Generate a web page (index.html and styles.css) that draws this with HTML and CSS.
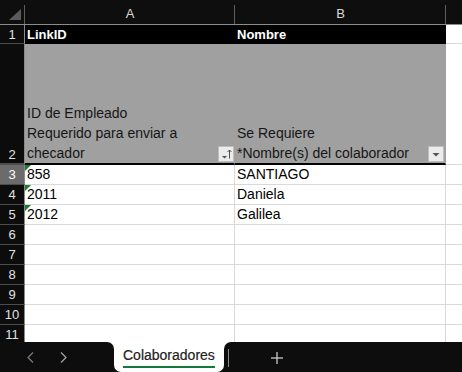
FILE: index.html
```html
<!DOCTYPE html>
<html lang="es">
<head>
<meta charset="utf-8">
<title>Colaboradores</title>
<link rel="stylesheet" href="styles.css">
</head>
<body>
<div class="app">
  <div class="sheet">
    <!-- column header row -->
    <div class="h corner"><svg class="tri" width="12" height="11" viewBox="0 0 12 11"><polygon points="12,0 12,11 0,11" fill="#5b5b5b"/></svg></div>
    <div class="h">A</div>
    <div class="h">B</div>
    <div class="h hc"></div>

    <!-- row 1 -->
    <div class="rn">1</div>
    <div class="d r1">LinkID</div>
    <div class="d r1">Nombre</div>
    <div class="d c"></div>

    <!-- row 2 -->
    <div class="rn bottom">2</div>
    <div class="d r2">
      <div class="r2text">ID de Empleado<br>Requerido para enviar a<br>checador</div>
      <div class="fbtn"><svg width="14" height="14" viewBox="0 0 14 14"><polygon points="3,9 8,9 5.5,11.5" fill="#505050"/><line x1="10.5" y1="3" x2="10.5" y2="11.5" stroke="#505050" stroke-width="1"/><polyline points="8.5,5 10.5,3 12.5,5" fill="none" stroke="#505050" stroke-width="1"/></svg></div>
    </div>
    <div class="d r2 r2b">
      <div class="r2text">Se Requiere<br>*Nombre(s) del colaborador</div>
      <div class="fbtn"><svg width="14" height="14" viewBox="0 0 14 14"><polygon points="3.5,6 10.5,6 7,9.5" fill="#555"/></svg></div>
    </div>
    <div class="d c"></div>

    <!-- data rows -->
    <div class="rn sel">3</div>
    <div class="d err">858</div>
    <div class="d">SANTIAGO</div>
    <div class="d c"></div>

    <div class="rn">4</div>
    <div class="d err">2011</div>
    <div class="d">Daniela</div>
    <div class="d c"></div>

    <div class="rn">5</div>
    <div class="d err">2012</div>
    <div class="d">Galilea</div>
    <div class="d c"></div>

    <div class="rn">6</div><div class="d"></div><div class="d"></div><div class="d c"></div>
    <div class="rn">7</div><div class="d"></div><div class="d"></div><div class="d c"></div>
    <div class="rn">8</div><div class="d"></div><div class="d"></div><div class="d c"></div>
    <div class="rn">9</div><div class="d"></div><div class="d"></div><div class="d c"></div>
    <div class="rn">10</div><div class="d"></div><div class="d"></div><div class="d c"></div>
    <div class="rn">11</div><div class="d"></div><div class="d"></div><div class="d c"></div>
  </div>

  <div class="tabbar">
    <div class="seg left">
      <svg class="nav prev" width="7" height="11" viewBox="0 0 7 11"><polyline points="6,0.5 1,5.5 6,10.5" fill="none" stroke="#7c7c7c" stroke-width="1.2"/></svg>
      <svg class="nav next" width="7" height="11" viewBox="0 0 7 11"><polyline points="1,0.5 6,5.5 1,10.5" fill="none" stroke="#a4a4a4" stroke-width="1.2"/></svg>
    </div>
    <div class="tabwrap">
      <div class="tab"><span class="tabtext">Colaboradores</span></div>
    </div>
    <div class="seg right">
      <span class="sep"></span>
      <svg class="plus" width="12" height="12" viewBox="0 0 12 12"><line x1="6" y1="0" x2="6" y2="12" stroke="#d8d8d8" stroke-width="1.2"/><line x1="0" y1="6" x2="12" y2="6" stroke="#d8d8d8" stroke-width="1.2"/></svg>
    </div>
  </div>
</div>
</body>
</html>
```

FILE: styles.css
```css
* { box-sizing: border-box; }
html, body { margin: 0; padding: 0; background: #ffffff; }
body { font-family: "Liberation Sans", Arial, sans-serif; }

.app {
  width: 462px;
  height: 372px;
  display: flex;
  flex-direction: column;
  overflow: hidden;
}

.sheet {
  height: 342px;
  overflow: hidden;
  display: grid;
  grid-template-columns: 25px 210px 211px 1fr;
  grid-template-rows: 25px 19px 121px;
  grid-auto-rows: 20px;
  flex: none;
}

/* column headers */
.h {
  position: relative;
  background: #0e0e0e;
  border-bottom: 1px solid #8c8c8c;
  color: #d9d9d9;
  font-size: 13px;
  line-height: 16px;
  text-align: center;
  padding-top: 6px;
}
.h::after {
  content: "";
  position: absolute;
  right: 0;
  top: 5px;
  bottom: 0;
  width: 1px;
  background: #5e5e5e;
}
.h.hc::after { display: none; }
.corner { padding: 0; }
.corner .tri { display: block; margin: 9px 0 0 9px; }

/* row numbers */
.rn {
  background: #0c0c0c;
  color: #e2e2e2;
  border-right: 1px solid #8a8a8a;
  border-bottom: 1px solid #4c4c4c;
  font-size: 13px;
  display: flex;
  align-items: center;
  justify-content: center;
}
.rn.bottom { align-items: flex-end; padding-bottom: 1px; border-bottom: 2px solid #4c4c4c; }
.rn.sel { background: #6b6b6b; color: #ffffff; }

/* data cells */
.d {
  position: relative;
  background: #ffffff;
  border-right: 1px solid #d9d9d9;
  border-bottom: 1px solid #d9d9d9;
  color: #000000;
  font-size: 14px;
  line-height: 19px;
  padding-left: 2px;
  white-space: nowrap;
  overflow: hidden;
}
.d.c { border-right: none; }

.d.r1 {
  background: #000000;
  border-color: #000000;
  color: #ffffff;
  font-weight: bold;
  font-size: 13px;
}

.d.r2 {
  background: #a0a0a0;
  border-right-color: #a0a0a0;
  border-bottom: 2px solid #000000;
  color: #161616;
  display: flex;
  align-items: flex-end;
  overflow: visible;
}
.r2b { padding-right: 1px; }
.r2text { flex: 1; line-height: 20px; }
.fbtn {
  width: 16px;
  height: 16px;
  margin-bottom: 1px;
  background: #ececec;
  border: 1px solid #bdbdbd;
  display: flex;
  align-items: center;
  justify-content: center;
  flex: none;
}
.fbtn svg { display: block; }

.err::before {
  content: "";
  position: absolute;
  left: 0;
  top: 0;
  border-top: 6px solid #1e7b34;
  border-right: 6px solid transparent;
}

/* sheet tabs */
.tabbar {
  height: 30px;
  display: flex;
  flex: none;
}
.seg {
  background: #0d0d0d;
  height: 30px;
  display: flex;
  align-items: center;
}
.seg.left {
  width: 114px;
  border-top-right-radius: 7px;
  padding-left: 27px;
}
.nav { display: block; margin-top: 1px; }
.nav.next { margin-left: 26px; }

.tabwrap {
  width: 110px;
  background: #0d0d0d;
}
.tab {
  height: 30px;
  background: #ffffff;
  border-bottom-left-radius: 7px;
  border-bottom-right-radius: 7px;
  padding: 4px 0 0 9px;
}
.tabtext {
  display: inline-block;
  font-size: 14px;
  line-height: 16px;
  color: #222222;
  padding-bottom: 3px;
  border-bottom: 2px solid #137a3b;
  -webkit-text-stroke: 0.2px #222222;
}

.seg.right {
  flex: 1;
  border-top-left-radius: 7px;
  padding-left: 4px;
}
.sep {
  display: block;
  width: 1px;
  height: 18px;
  background: #8a8a8a;
  margin-top: 1px;
}
.plus { display: block; margin-left: 42px; margin-top: 1px; }
```
